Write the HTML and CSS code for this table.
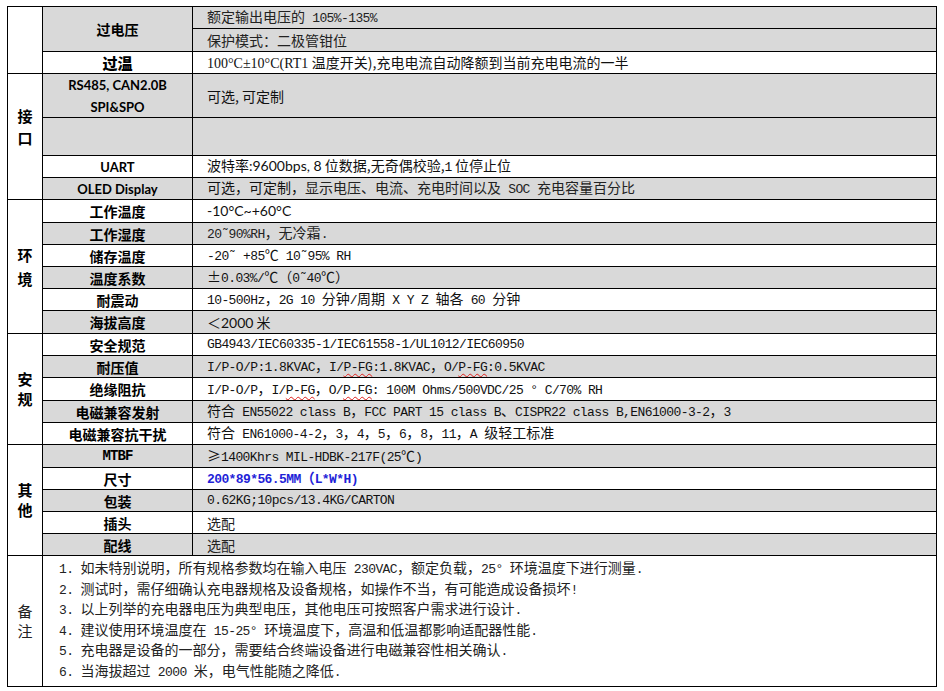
FILE: index.html
```html
<!DOCTYPE html>
<html lang="zh-CN">
<head>
<meta charset="utf-8">
<title>充电器规格</title>
<link rel="stylesheet" href="styles.css">
</head>
<body>
<div class="sheet">
  <!-- 保护 -->
  <div class="c cat r3"></div>
  <div class="c l g r2"><span>过电压</span></div>
  <div class="c v g s"><span>额定输出电压的<span class="m"> 105%-135%</span></span></div>
  <div class="c v g s"><span>保护模式：二极管钳位</span></div>
  <div class="c l heavy"><span>过温</span></div>
  <div class="c v"><span><span class="t">100°C±10°C(RT1 </span>温度开关),充电电流自动降额到当前充电电流的一半</span></div>

  <!-- 接口 -->
  <div class="c cat r4 cat-if"><span>接</span><span>口</span></div>
  <div class="c l en g two"><span>RS485, CAN2.0B<br>SPI&amp;SPO</span></div>
  <div class="c v g"><span>可选, 可定制</span></div>
  <div class="c l g"></div>
  <div class="c v g"></div>
  <div class="c l en"><span>UART</span></div>
  <div class="c v"><span>波特率<span class="la">:9600bps, 8</span> 位数据,无奇偶校验,<span class="m">1</span> 位停止位</span></div>
  <div class="c l en g"><span>OLED Display</span></div>
  <div class="c v g"><span>可选，可定制，<span class="s">显示电压、电流、充电时间以及<span class="m"> SOC </span>充电容量百分比</span></span></div>

  <!-- 环境 -->
  <div class="c cat r6 cat-env"><span>环</span><span>境</span></div>
  <div class="c l"><span>工作温度</span></div>
  <div class="c v"><span class="la">-10°C~+60°C</span></div>
  <div class="c l g"><span>工作湿度</span></div>
  <div class="c v g s"><span><span class="m">20˜90%RH</span>，无冷霜<span class="m">.</span></span></div>
  <div class="c l"><span>储存温度</span></div>
  <div class="c v sm"><span>-20˜ +85<span class="z">℃</span> 10˜95% RH</span></div>
  <div class="c l g"><span>温度系数</span></div>
  <div class="c v g sm"><span><span class="z">±</span>0.03%/<span class="z">℃（</span>0˜40<span class="z">℃）</span></span></div>
  <div class="c l"><span>耐震动</span></div>
  <div class="c v sm"><span>10-500Hz<span class="z">，</span>2G 10 <span class="z">分钟</span>/<span class="z">周期</span> X Y Z <span class="z">轴各</span> 60 <span class="z">分钟</span></span></div>
  <div class="c l g"><span>海拔高度</span></div>
  <div class="c v g"><span>＜<span class="la">2000</span> 米</span></div>

  <!-- 安规 -->
  <div class="c cat r5"><span>安</span><span>规</span></div>
  <div class="c l"><span>安全规范</span></div>
  <div class="c v sm"><span>GB4943/IEC60335-1/IEC61558-1/UL1012/IEC60950</span></div>
  <div class="c l g"><span>耐压值</span></div>
  <div class="c v g sm"><span>I/P-O/P:1.8KVAC<span class="z">，</span>I/<span class="sp">P-FG</span>:1.8KVAC<span class="z">，</span>O/<span class="sp">P-FG</span>:0.5KVAC</span></div>
  <div class="c l"><span>绝缘阻抗</span></div>
  <div class="c v sm"><span>I/P-O/P<span class="z">，</span>I/<span class="sp">P-FG</span><span class="z">，</span>O/<span class="sp">P-FG</span>: 100M Ohms/500VDC/25 ° C/70% RH</span></div>
  <div class="c l g"><span>电磁兼容发射</span></div>
  <div class="c v g sm"><span><span class="z">符合</span> EN55022 class B<span class="z">，</span>FCC PART 15 class B<span class="z">、</span>CISPR22 class B,EN61000-3-2<span class="z">，</span>3</span></div>
  <div class="c l"><span>电磁兼容抗干扰</span></div>
  <div class="c v sm"><span><span class="z">符合</span> EN61000-4-2<span class="z">，</span>3<span class="z">，</span>4<span class="z">，</span>5<span class="z">，</span>6<span class="z">，</span>8<span class="z">，</span>11<span class="z">，</span>A <span class="z">级轻工标准</span></span></div>

  <!-- 其他 -->
  <div class="c cat r5"><span>其</span><span>他</span></div>
  <div class="c l g tb"><span>MTBF</span></div>
  <div class="c v g sm"><span><span class="z">≥</span>1400Khrs MIL-HDBK-217F(25<span class="z">℃</span>)</span></div>
  <div class="c l"><span>尺寸</span></div>
  <div class="c v sm blue"><span>200*89*56.5MM<span class="z">（</span>L*W*H)</span></div>
  <div class="c l g"><span>包装</span></div>
  <div class="c v g sm"><span>0.62KG;10pcs/13.4KG/CARTON</span></div>
  <div class="c l"><span>插头</span></div>
  <div class="c v s"><span>选配</span></div>
  <div class="c l g"><span>配线</span></div>
  <div class="c v g s"><span>选配</span></div>

  <!-- 备注 -->
  <div class="c cat cat-note"><span>备</span><span>注</span></div>
  <div class="c notes s">
    <p><span class="m">1. </span>如未特别说明，所有规格参数均在输入电压<span class="m"> 230VAC</span>，额定负载，<span class="m">25° </span>环境温度下进行测量<span class="m">.</span></p>
    <p><span class="m">2. </span>测试时，需仔细确认充电器规格及设备规格，如操作不当，有可能造成设备损坏<span class="m">!</span></p>
    <p><span class="m">3. </span>以上列举的充电器电压为典型电压，其他电压可按照客户需求进行设计<span class="m">.</span></p>
    <p><span class="m">4. </span>建议使用环境温度在<span class="m"> 15-25° </span>环境温度下，高温和低温都影响适配器性能<span class="m">.</span></p>
    <p><span class="m">5. </span>充电器是设备的一部分，需要结合终端设备进行电磁兼容性相关确认<span class="m">.</span></p>
    <p><span class="m">6. </span>当海拔超过<span class="m"> 2000 </span>米，电气性能随之降低<span class="m">.</span></p>
  </div>
</div>
</body>
</html>
```

FILE: styles.css
```css
* { box-sizing: border-box; }
html, body { margin: 0; background: #fff; }
body {
  font-family: "Noto Sans CJK SC", sans-serif;
  color: #000;
}

.sheet {
  display: grid;
  grid-template-columns: 35px 150px 744px;
  grid-template-rows: 22px 23px 22px 44px 38px 22px 22px 23px 22px 22px 22px 22px 23px 22px 22px 23px 22px 22px 23px 22px 22px 22px 22px 131px;
  width: 930px;
  margin: 6px 0 0 7px;
  border-top: 1px solid #000;
  border-left: 1px solid #000;
}

.c {
  border-right: 1px solid #000;
  border-bottom: 1px solid #000;
  display: flex;
  align-items: center;
  min-width: 0;
  white-space: nowrap;
  overflow: hidden;
  line-height: 16px;
}

.g { background: #d9d9d9; }

.r2 { grid-row: span 2; }
.r3 { grid-row: span 3; }
.r4 { grid-row: span 4; }
.r5 { grid-row: span 5; }
.r6 { grid-row: span 6; }

/* category column */
.cat {
  flex-direction: column;
  justify-content: center;
  font-size: 15px;
  font-weight: 700;
  line-height: 20px;
}
.cat-if { line-height: 22px; padding-bottom: 20px; }
.cat-env { line-height: 24px; }
.cat-note { font-weight: 400; color: #222; }

/* label column */
.l {
  justify-content: center;
  font-size: 14px;
  font-weight: 700;
}
.heavy { font-size: 15px; font-weight: 900; }
.en {
  font-family: "Lato", "Noto Sans CJK SC", sans-serif;
  font-size: 13px;
}
.two { line-height: 22px; text-align: center; }
.tb {
  font-family: "Liberation Mono", monospace;
  font-size: 14px;
  letter-spacing: -0.9px;
}

/* value column */
.v {
  padding-left: 14px;
  font-size: 14px;
  color: #111;
}
.s { color: #222; }
.sm {
  font-family: "Liberation Mono", "Noto Sans CJK SC", monospace;
  font-size: 13px;
  letter-spacing: -0.6px;
  color: #111;
}
.m {
  font-family: "Liberation Mono", monospace;
  font-size: 13px;
  letter-spacing: -0.6px;
}
.z {
  font-family: "Noto Sans CJK SC", sans-serif;
  font-size: 14px;
  letter-spacing: 0;
}
.t {
  font-family: "Liberation Serif", serif;
  font-size: 14px;
}
.la {
  font-family: "Lato", sans-serif;
  font-size: 14px;
}
.sp {
  text-decoration: underline wavy #e0201c;
  text-decoration-thickness: 1px;
  text-underline-offset: 2px;
}
.blue {
  color: #1f1fd8;
  font-weight: 700;
}

/* notes */
.notes {
  grid-column: span 2;
  display: block;
  padding: 1px 0 0 16px;
  font-size: 14px;
  line-height: 20px;
}
.notes p {
  margin: 0;
  height: 20.5px;
  white-space: pre;
}
```
